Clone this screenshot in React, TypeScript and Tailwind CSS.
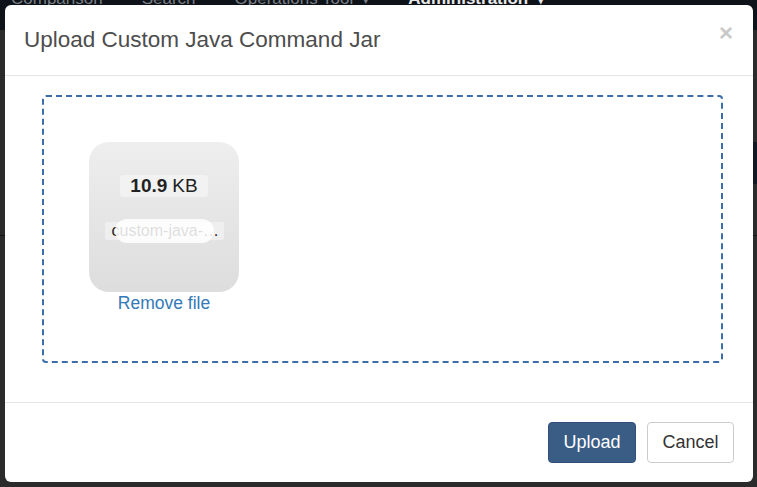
import React from 'react'

const NavItem: React.FC<{ label: string; caret?: boolean; active?: boolean }> = x => (
  <div className={x.active ? "font-bold text-[#e8e8e8]" : "text-[#7a7f86]"}>
    {x.label}
    {x.caret ? <span className="ml-[10px] text-[11px]">▾</span> : null}
  </div>
)

const FilePreview: React.FC<{ size: string; unit: string; name: string }> = x => (
  <div className="flex flex-col items-center w-[150px]">
    <div className="flex flex-col items-center w-[150px] h-[150px] rounded-[20px] bg-gradient-to-b from-[#eeeeee] to-[#dddddd] pt-[33px]">
      <div className="h-[22px] px-[10px] flex items-center rounded-[3px] bg-white/40 text-[19px] text-[#222]">
        <b>{x.size}</b>
        <span className="ml-[5px]">{x.unit}</span>
      </div>
      <div className="mt-[25px] w-[119px] h-[18px] bg-white/40 rounded-[2px] flex items-center text-[16px] text-[#222] leading-none overflow-hidden">
        <span className="pl-[7px] pr-[2px] whitespace-nowrap overflow-hidden text-ellipsis">{x.name}</span>
      </div>
      <div className="-mt-[21px] w-[99px] h-[24px] rounded-full bg-white/85" />
    </div>
    <a className="-mt-[2px] text-[17.5px] text-[#337ab7] cursor-pointer">Remove file</a>
  </div>
)

export default function App() {
  return (
    <div className="relative w-[757px] h-[487px] overflow-hidden bg-[#2b2b2b] font-['Liberation_Sans',Arial,sans-serif]">
      <div className="h-[40px] bg-[#0e1319] flex gap-[39px] pl-[11px] text-[17px] leading-none -mt-[10px]">
        <NavItem label="Comparison" />
        <NavItem label="Search" />
        <NavItem label="Operations Tool" caret />
        <NavItem label="Administration" caret active />
      </div>
      <div className="h-[206px] border-b border-[#151515]" />
      <div className="absolute right-0 top-[142px] w-[4px] h-[42px] bg-[#121821]" />

      <div className="absolute left-[5px] top-[5px] w-[748px] h-[477px] bg-white rounded-[6px] flex flex-col">
        <div className="h-[71px] border-b border-[#e5e5e5] flex items-start justify-between pl-[19px] pr-[20px]">
          <h4 className="mt-[21px] text-[22.5px] leading-[28px] text-[#4d4d4d]">Upload Custom Java Command Jar</h4>
          <button className="mt-[16px] text-[24px] font-bold text-[#c9c9c9] leading-[24px]">×</button>
        </div>

        <div className="flex-1 pt-[19px] pl-[37px] pr-[30px]">
          <div className="h-[268px] border-2 border-dashed border-[#3b6ea8] rounded-[4px] pl-[45px] pt-[45px]">
            <FilePreview size="10.9" unit="KB" name="custom-java-command.jar" />
          </div>
        </div>

        <div className="h-[80px] border-t border-[#e5e5e5] flex items-start justify-end gap-[11px] pr-[19px] pt-[19px]">
          <button className="w-[88px] h-[41px] rounded-[4px] bg-[#3a5d85] border border-[#30507a] text-white text-[18px]">Upload</button>
          <button className="w-[87px] h-[41px] rounded-[4px] bg-white border border-[#cccccc] text-[#333] text-[18px]">Cancel</button>
        </div>
      </div>
    </div>
  )
}
